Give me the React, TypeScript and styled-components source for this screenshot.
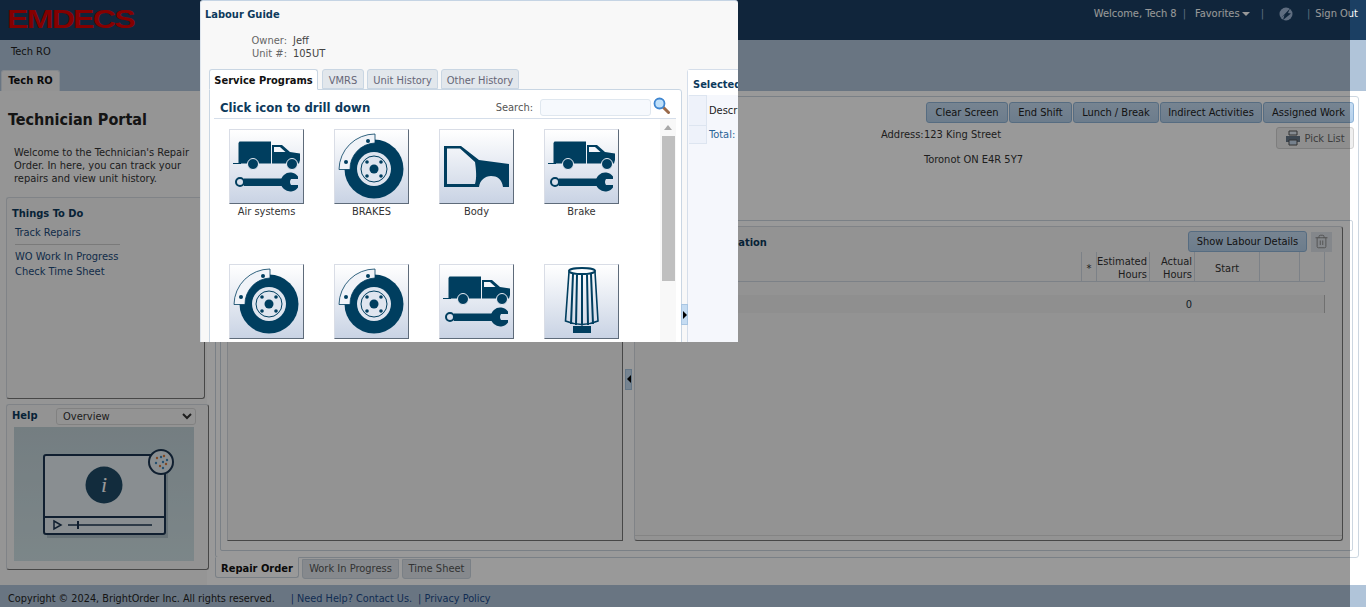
import React from "react";
import styled, { createGlobalStyle } from "styled-components";
import { Trash2 } from "lucide-react";

const GlobalStyle = createGlobalStyle`
  html, body {
    margin: 0;
    padding: 0;
    background: #fff;
  }
  body {
    font-family: "DejaVu Sans Condensed", "DejaVu Sans", sans-serif;
    font-stretch: condensed;
    font-size: 11px;
    color: #333;
  }
  * {
    box-sizing: border-box;
  }
`;

const Page = styled.div`
  position: relative;
  width: 1366px;
  height: 607px;
  overflow: hidden;
  display: flex;
  flex-direction: column;
  background: #fff;
`;

// 상단 헤더
const Header = styled.header`
  height: 40px;
  flex: none;
  background: #1b3f63;
  display: flex;
  align-items: flex-start;
  justify-content: space-between;
  padding: 0 8px;
  color: #fff;
`;

const Logo = styled.div`
  font-family: "Liberation Sans", sans-serif;
  font-size: 26px;
  font-weight: 700;
  line-height: 27px;
  margin: 6px 0 0 -1px;
  color: #de0000;
  letter-spacing: -1.5px;
  transform: scaleX(1.24);
  transform-origin: left center;
`;

const UserMenu = styled.nav`
  display: flex;
  align-items: center;
  height: 28px;
  line-height: 28px;
`;

const MenuSep = styled.span<{ $left: number }>`
  margin-left: ${(p) => p.$left}px;
  color: #9db7d2;
`;

const MenuText = styled.span<{ $left: number }>`
  margin-left: ${(p) => p.$left}px;
`;

const Caret = styled.span`
  width: 0;
  height: 0;
  margin-left: 2px;
  border-left: 4px solid transparent;
  border-right: 4px solid transparent;
  border-top: 4px solid #fff;
`;

const SubNav = styled.div`
  height: 30px;
  flex: none;
  background: #b0c4d9;
  padding: 4px 0 0 11px;
  line-height: 15px;
  color: #222;
`;

const TabStrip = styled.div`
  height: 21px;
  flex: none;
  background: #b0c4d9;
  display: flex;
  padding-left: 1px;
`;

const TopTab = styled.div`
  width: 59px;
  background: #f5f5f5;
  border: 1px solid #dbe3ec;
  border-bottom: none;
  border-radius: 3px 3px 0 0;
  font-weight: 700;
  color: #111;
  text-align: center;
  line-height: 19px;
`;

const Body = styled.main`
  flex: 1;
  min-height: 0;
  display: flex;
  background: #fff;
`;

const Sidebar = styled.aside`
  width: 207px;
  flex: none;
  background: #f8f8f8;
  display: flex;
  flex-direction: column;
  padding-left: 6px;
`;

const PortalTitle = styled.h1`
  margin: 18px 0 0 2px;
  font-size: 16px;
  line-height: 21px;
  font-weight: 700;
  color: #222;
`;

const Intro = styled.p`
  margin: 16px 0 0 8px;
  width: 180px;
  line-height: 13px;
  color: #333;
`;

const SideBox = styled.section`
  background: #f5f5f5;
  border: 1px solid #d5dbe2;
  border-right-color: #777;
  border-bottom-color: #777;
  border-radius: 3px;
`;

const TodoBox = styled(SideBox)`
  width: 199px;
  height: 202px;
  margin-top: 12px;
  padding: 9px 0 0 5px;
`;

const BoxTitle = styled.div`
  font-weight: 700;
  line-height: 14px;
  color: #0d3a5c;
`;

const TodoLink = styled.div`
  margin-left: 3px;
  line-height: 15px;
  color: #1b4a7a;
`;

const TodoRule = styled.div`
  width: 105px;
  height: 1px;
  margin: 4px 0 4px 3px;
  background: #ccc;
`;

const HelpBox = styled(SideBox)`
  width: 203px;
  height: 166px;
  margin-top: 5px;
  padding: 2px 7px 0 5px;
`;

const HelpHead = styled.div`
  display: flex;
  align-items: center;
  justify-content: space-between;
  height: 18px;
  margin-right: 5px;
`;

const HelpSelect = styled.select`
  width: 140px;
  height: 17px;
  padding: 0 2px;
  border: 1px solid #d8d8d8;
  border-radius: 3px;
  background: #f5f5f5;
  font: inherit;
  color: #333;
`;

const HelpPicture = styled.div`
  width: 180px;
  height: 134px;
  margin: 2px 0 0 2px;
  background: linear-gradient(#c2d2d8, #cfe0e4);
`;

const Gutter = styled.div`
  width: 8px;
  flex: none;
  display: flex;
  align-items: center;
  padding-bottom: 66px;
`;

const Handle = styled.div<{ $h?: number }>`
  width: 7px;
  height: ${(p) => p.$h ?? 21}px;
  flex: none;
  background: #c5dcf2;
  border: 1px solid #a9c6e2;
  display: flex;
  align-items: center;
  justify-content: center;
`;

const Arrow = styled.span<{ $left?: boolean }>`
  width: 0;
  height: 0;
  border-top: 4px solid transparent;
  border-bottom: 4px solid transparent;
  ${(p) =>
    p.$left ? "border-right: 4px solid #000;" : "border-left: 4px solid #000;"}
`;

const Workspace = styled.div`
  flex: 1;
  display: flex;
  flex-direction: column;
  padding: 5px 7px 6px 0;
`;

const OuterCard = styled.div`
  height: 462px;
  flex: none;
  border: 1px solid #ccd6e0;
  border-radius: 3px;
  padding: 5px 5px 6px 4px;
  display: flex;
  flex-direction: column;
`;

const TopArea = styled.div`
  height: 118px;
  flex: none;
  position: relative;
  display: flex;
  flex-direction: column;
  align-items: flex-end;
  margin-right: -1px;
`;

const ButtonRow = styled.div`
  display: flex;
  gap: 1px;
`;

const ActionButton = styled.button<{ $w: number }>`
  width: ${(p) => p.$w}px;
  height: 21px;
  padding: 0;
  border: 1px solid #8fb4d8;
  border-radius: 3px;
  background: linear-gradient(#c6dcf2, #b5d0ea);
  color: #222;
  font: inherit;
  white-space: nowrap;
`;

const PickButton = styled.button`
  width: 78px;
  height: 22px;
  margin-top: 4px;
  padding: 0;
  border: 1px solid #d2d2d2;
  border-radius: 3px;
  background: #efefef;
  color: #666;
  font: inherit;
  display: flex;
  align-items: center;
  justify-content: center;
  gap: 3px;
`;

const AddressBlock = styled.div`
  position: absolute;
  left: 661px;
  top: 26px;
  display: grid;
  grid-template-columns: 43px auto;
  row-gap: 12px;
  line-height: 13px;
  color: #333;
`;

const InnerCard = styled.div`
  flex: 1;
  border: 1px solid #ccd6e0;
  border-radius: 2px;
  padding: 5px 9px 9px 6px;
  display: flex;
`;

const PaneLeft = styled.div`
  width: 396px;
  flex: none;
  background: #f5f5f5;
  border: 1px solid #d5dbe2;
  border-right-color: #777;
  border-bottom-color: #777;
`;

const SplitGutter = styled.div`
  width: 11px;
  flex: none;
  display: flex;
  align-items: center;
  justify-content: center;
  padding-bottom: 9px;
`;

const PaneRight = styled.div`
  flex: 1;
  background: #f5f5f5;
  border: 1px solid #d5dbe2;
  border-right-color: #777;
  border-bottom-color: #777;
  border-radius: 3px;
  padding: 4px 0 0 6px;
  display: flex;
  flex-direction: column;
`;

const LabourHead = styled.div`
  height: 21px;
  display: flex;
  align-items: center;
  margin-right: 10px;
`;

const LabourTitle = styled.div`
  flex: 1;
  padding: 2px 0 0 18px;
  font-weight: 700;
  color: #0d3a5c;
`;

const LabourBtn = styled(ActionButton)`
  margin-right: 4px;
`;

const TrashBtn = styled.div`
  width: 21px;
  height: 20px;
  background: #dde2e8;
  display: flex;
  align-items: center;
  justify-content: center;
  color: #888;
`;

const GridRow = styled.div`
  display: grid;
  grid-template-columns: 1fr 15px 53px 45px 65px 40px 25px;
  margin-right: 17px;
`;

const HeadCell = styled.div<{ $right?: boolean }>`
  height: 30px;
  border-right: 1px solid #cfd8e2;
  border-bottom: 1px solid #cfd8e2;
  display: flex;
  align-items: center;
  justify-content: ${(p) => (p.$right ? "flex-end" : "center")};
  text-align: ${(p) => (p.$right ? "right" : "center")};
  line-height: 13px;
  padding: ${(p) => (p.$right ? "2px 2px 0 0" : "3px 0 0")};
  color: #333;
`;

const DataRow = styled(GridRow)`
  height: 18px;
  margin-top: 13px;
  background: #eeeeee;
  border-right: 1px solid #bbb;
  line-height: 20px;
`;

const DataValue = styled.div`
  grid-column: 4;
  text-align: right;
  padding-right: 2px;
  color: #234;
`;

const PaneFoot = styled.div`
  margin: auto 0 4px -6px;
  height: 1px;
  background: #ddd;
`;

const BottomTabs = styled.div`
  display: flex;
  gap: 3px;
  height: 21px;
  flex: none;
`;

const BottomTab = styled.div<{ $active?: boolean; $w: number }>`
  width: ${(p) => p.$w}px;
  height: ${(p) => (p.$active ? 21 : 20)}px;
  margin-top: ${(p) => (p.$active ? -1 : 1)}px;
  background: ${(p) => (p.$active ? "#fff" : "#dfe5ec")};
  border: 1px solid #ccd6e0;
  ${(p) => p.$active && "border-top-color: #fff;"}
  border-radius: 0 0 3px 3px;
  font-weight: ${(p) => (p.$active ? 700 : 400)};
  color: ${(p) => (p.$active ? "#111" : "#555")};
  text-align: center;
  line-height: ${(p) => (p.$active ? 21 : 18)}px;
`;

const Footer = styled.footer`
  height: 22px;
  flex: none;
  background: #b0c4d9;
  display: flex;
  align-items: center;
  padding: 4px 0 0 8px;
  font-size: 10.8px;
  color: #222;
`;

const FootLink = styled.span<{ $left: number }>`
  margin-left: ${(p) => p.$left}px;
  color: #1b4a8a;
`;

// 모달 뒤 어두운 레이어
const Overlay = styled.div`
  position: absolute;
  left: 0;
  top: 0;
  width: 1350px;
  height: 607px;
  background: rgba(0, 0, 0, 0.4);
`;

const Modal = styled.div`
  position: absolute;
  left: 200px;
  top: 0;
  width: 538px;
  height: 342px;
  background: #f8f8f8;
  border-top: 1px solid #c5d4e4;
  border-left: 1px solid #dfe6ee;
  border-radius: 3px 3px 0 0;
  overflow: hidden;
  padding: 7px 0 0 4px;
`;

const ModalTitle = styled.div`
  font-weight: 700;
  line-height: 14px;
  color: #0d3a5c;
`;

const OwnerGrid = styled.div`
  display: grid;
  grid-template-columns: 82px auto;
  column-gap: 6px;
  margin-top: 12px;
  line-height: 13px;
  color: #444;
  justify-content: start;
`;

const OwnerLabel = styled.div`
  text-align: right;
  color: #666;
`;

const ModalColumns = styled.div`
  display: flex;
  margin-top: 9px;
  height: 300px;
`;

const GuideColumn = styled.div`
  width: 473px;
  flex: none;
  margin-left: 4px;
  display: flex;
  flex-direction: column;
`;

const ModalTabs = styled.div`
  display: flex;
  height: 21px;
  flex: none;
  margin-bottom: -1px;
  position: relative;
`;

const ModalTab = styled.div<{ $active?: boolean; $w: number; $gap: number }>`
  width: ${(p) => p.$w}px;
  margin-right: ${(p) => p.$gap}px;
  height: ${(p) => (p.$active ? 21 : 20)}px;
  background: ${(p) => (p.$active ? "#fff" : "#e2e7ec")};
  border: 1px solid #c9d6e3;
  ${(p) => p.$active && "border-bottom-color: #fff;"}
  border-radius: 3px 3px 0 0;
  font-weight: ${(p) => (p.$active ? 700 : 400)};
  color: ${(p) => (p.$active ? "#111" : "#667")};
  text-align: center;
  line-height: 21px;
`;

const GuidePanel = styled.div`
  flex: 1;
  background: #fff;
  border: 1px solid #c9d6e3;
  border-radius: 0 3px 0 0;
  padding: 0 5px 0 4px;
  display: flex;
  flex-direction: column;
  overflow: hidden;
`;

const GuideHead = styled.div`
  height: 29px;
  flex: none;
  display: flex;
  align-items: center;
  padding: 6px 0 0 6px;
  border-bottom: 1px solid #d5deea;
`;

const DrillTitle = styled.div`
  font-size: 13px;
  font-weight: 700;
  color: #0d3a5c;
  flex: 1;
`;

const SearchLabel = styled.label`
  color: #555;
  margin-right: 7px;
`;

const SearchInput = styled.input`
  width: 111px;
  height: 17px;
  border: 1px solid #dfe7ef;
  border-radius: 3px;
  background: #f6f9fd;
  margin-right: 2px;
`;

const SearchIcon = styled.svg`
  width: 17px;
  height: 17px;
  margin-top: -4px;
  margin-right: 6px;
`;

const GuideBody = styled.div`
  flex: 1;
  display: flex;
  min-height: 0;
`;

const TileGrid = styled.div`
  flex: 1;
  display: grid;
  grid-template-columns: repeat(4, 105px);
  grid-auto-rows: 135px;
  padding: 10px 0 0 15px;
`;

const Tile = styled.div`
  width: 75px;
  text-align: center;
`;

const TileIcon = styled.svg`
  display: block;
  width: 75px;
  height: 75px;
  background: linear-gradient(#fff, #c9d3e4);
  border: 1px solid #d9dde6;
  border-right-color: #5e6b7a;
  border-bottom-color: #5e6b7a;
`;

const TileLabel = styled.div`
  margin-top: 1px;
  line-height: 14px;
  white-space: nowrap;
  color: #333;
`;

const Scrollbar = styled.div`
  width: 16px;
  flex: none;
  background: #f8f8f8;
  display: flex;
  flex-direction: column;
  align-items: center;
  padding-top: 6px;
`;

const ScrollArrow = styled.span`
  width: 0;
  height: 0;
  margin-bottom: 6px;
  border-left: 4px solid transparent;
  border-right: 4px solid transparent;
  border-bottom: 5px solid #a8a8a8;
`;

const ScrollThumb = styled.div`
  width: 13px;
  height: 145px;
  background: #bfbfbf;
`;

const ModalGutter = styled.div`
  width: 5px;
  flex: none;
  position: relative;
`;

const ModalHandle = styled(Handle)`
  position: absolute;
  left: -1px;
  top: 235px;
`;

const SelectedPane = styled.div`
  width: 200px;
  flex: none;
  margin-top: 0;
  background: #f5f7fc;
  border: 1px solid #d5deea;
  border-radius: 3px 0 0 0;
`;

const SelectedTitle = styled.div`
  height: 25px;
  background: #fff;
  padding: 2px 0 0 5px;
  font-weight: 700;
  line-height: 26px;
  color: #0d3a5c;
`;

const SelectedRow = styled.div<{ $h: number }>`
  display: grid;
  grid-template-columns: 18px 1fr;
  height: ${(p) => p.$h}px;
  margin-left: 1px;
  line-height: ${(p) => p.$h + 2}px;
`;

const SelectedBlank = styled.div`
  background: #eef2fa;
  border: 1px solid #dde5f0;
  border-left: none;
`;

const SelectedCell = styled.div<{ $link?: boolean }>`
  padding-left: 2px;
  color: ${(p) => (p.$link ? "#2a6496" : "#222")};
`;

const NAVY = "#003e5f";

const TruckWrench = () => (
  <TileIcon viewBox="0 0 73 73">
    <g transform="translate(-1 -1)">
      <path fill={NAVY} d="M9.500 14l1-1.500H42V34.500H9.500z" />
      <path fill={NAVY} d="M4 34h8v1H4z" />
      <path fill={NAVY} d="M43 16h10l8 7 10 1.500V31l-1 3.500H43z" />
      <path fill="#f3f5fa" d="M45 18h6l5.500 5H45z" />
      <circle cx="24" cy="35" r="5.500" fill={NAVY} stroke="#e8ecf4" strokeWidth="1" />
      <circle cx="63" cy="35" r="5.500" fill={NAVY} stroke="#e8ecf4" strokeWidth="1" />
      <circle cx="11" cy="53" r="4" fill="none" stroke={NAVY} strokeWidth="2" />
      <path fill={NAVY} d="M15 49.500h38v7.500H15z" />
      <path fill={NAVY} d="M69 47.500A9.500 9.500 0 1 0 69 58.500L69 56H62Q60 53 62 50H69Z" />
    </g>
  </TileIcon>
);

const BrakeDisc = () => (
  <TileIcon viewBox="0 0 73 73">
    <g transform="translate(-1 -1)">
      <circle cx="40" cy="40" r="29.500" fill={NAVY} />
      <circle cx="40" cy="40" r="17" fill="#dfe5ef" />
      <circle cx="40" cy="40" r="13" fill="none" stroke={NAVY} strokeWidth="1" />
      <circle cx="40" cy="40" r="4.500" fill={NAVY} />
      <circle cx="33" cy="33" r="1.800" fill={NAVY} />
      <circle cx="47" cy="33" r="1.800" fill={NAVY} />
      <circle cx="33" cy="47" r="1.800" fill={NAVY} />
      <circle cx="47" cy="47" r="1.800" fill={NAVY} />
      <path
        fill="#f0f3f8"
        stroke={NAVY}
        strokeWidth="0.800"
        d="M5 40.500A36 36 0 0 1 41 5V14A26 26 0 0 0 16 40.500z"
      />
      <circle cx="34" cy="12" r="2" fill={NAVY} />
      <circle cx="12" cy="33" r="2" fill={NAVY} />
    </g>
  </TileIcon>
);

const BodyPanel = () => (
  <TileIcon viewBox="0 0 73 73">
    <path
      transform="translate(-1 -1)"
      fill={NAVY}
      fillRule="evenodd"
      d="M5 17H22L40 31 70 35V58H64C63 50 58 47 52 47 46 47 41 51 40 58H5zM8 19.500V55H36C38 49 37 40 36 33L21 19.500z"
    />
  </TileIcon>
);

const AirFilter = () => (
  <TileIcon viewBox="0 0 73 73">
    <g transform="translate(-1 -1)" fill="none" stroke={NAVY}>
      <ellipse cx="38" cy="7" rx="13" ry="3" strokeWidth="2" />
      <path strokeWidth="1.600" d="M25 8L21.500 57Q38 64 54 57L51 8" />
      <path strokeWidth="2" d="M29 10L27 60M33 10.500L32 61M38 11V61.500M43 10.500L44 61M47 10L49 60" />
      <path fill={NAVY} strokeWidth="0" d="M29 62h18v7H29z" />
    </g>
  </TileIcon>
);

const tiles = [
  { label: "Air systems", Icon: TruckWrench },
  { label: "BRAKES", Icon: BrakeDisc },
  { label: "Body", Icon: BodyPanel },
  { label: "Brake", Icon: TruckWrench },
  { label: "Brakes", Icon: BrakeDisc },
  { label: "Brakes", Icon: BrakeDisc },
  { label: "Cab", Icon: TruckWrench },
  { label: "Filters", Icon: AirFilter },
];

const topButtons: [string, number][] = [
  ["Clear Screen", 82],
  ["End Shift", 63],
  ["Lunch / Break", 86],
  ["Indirect Activities", 102],
  ["Assigned Work", 91],
];

export default function App() {
  return (
    <Page>
      <GlobalStyle />
      <Header>
        <Logo>EMDECS</Logo>
        <UserMenu>
          <span>Welcome, Tech 8</span>
          <MenuSep $left={6}>|</MenuSep>
          <MenuText $left={9}>Favorites</MenuText>
          <Caret />
          <MenuSep $left={11}>|</MenuSep>
          <svg width="14" height="14" viewBox="0 0 14 14" style={{ marginLeft: 15 }}>
            <circle cx="7" cy="7" r="6.500" fill="#9fb6d6" />
            <path d="M2 11L11 1.500 9 6 12 6.500 4 13 5.500 8z" fill="#1b3f63" />
          </svg>
          <MenuSep $left={14}>|</MenuSep>
          <MenuText $left={5}>Sign Out</MenuText>
        </UserMenu>
      </Header>
      <SubNav>Tech RO</SubNav>
      <TabStrip>
        <TopTab>Tech RO</TopTab>
      </TabStrip>
      <Body>
        <Sidebar>
          <PortalTitle>Technician Portal</PortalTitle>
          <Intro>
            Welcome to the Technician's Repair Order. In here, you can track your
            repairs and view unit history.
          </Intro>
          <TodoBox>
            <BoxTitle>Things To Do</BoxTitle>
            <TodoLink style={{ marginTop: 4 }}>Track Repairs</TodoLink>
            <TodoRule />
            <TodoLink>WO Work In Progress</TodoLink>
            <TodoLink>Check Time Sheet</TodoLink>
          </TodoBox>
          <HelpBox>
            <HelpHead>
              <BoxTitle>Help</BoxTitle>
              <HelpSelect defaultValue="Overview">
                <option>Overview</option>
              </HelpSelect>
            </HelpHead>
            <HelpPicture>
              <svg width="180" height="134" viewBox="0 0 180 134">
                <rect x="33" y="32" width="121" height="79" fill="#1b3550" opacity="0.18" />
                <rect x="30" y="28" width="121" height="79" rx="2" fill="#e4edf2" stroke="#1b3550" strokeWidth="2" />
                <path d="M30 90H151" stroke="#1b3550" strokeWidth="2" />
                <circle cx="90" cy="58" r="18.500" fill="#1f4a66" />
                <text x="90" y="65" textAnchor="middle" fill="#fff" fontSize="22" fontStyle="italic" fontFamily="Liberation Serif, serif">i</text>
                <path d="M40 94L47 98 40 102z" fill="none" stroke="#1b3550" strokeWidth="1.500" />
                <path d="M54 98H138" stroke="#1b3550" strokeWidth="1.500" />
                <path d="M64 94V102" stroke="#1b3550" strokeWidth="2" />
                <circle cx="147" cy="35" r="12" fill="#e4edf2" stroke="#1b3550" strokeWidth="2" />
                <g fill="#d9793a">
                  <circle cx="143" cy="31" r="1.200" />
                  <circle cx="150" cy="29" r="1.200" />
                  <circle cx="146" cy="39" r="1.200" />
                  <circle cx="152" cy="37" r="1.200" />
                </g>
                <g fill="#3f86b8">
                  <circle cx="147" cy="30" r="1.200" />
                  <circle cx="153" cy="33" r="1.200" />
                  <circle cx="142" cy="36" r="1.200" />
                  <circle cx="149" cy="35" r="1.200" />
                  <circle cx="149" cy="41" r="1.200" />
                </g>
              </svg>
            </HelpPicture>
          </HelpBox>
        </Sidebar>
        <Gutter>
          <Handle>
            <Arrow $left />
          </Handle>
        </Gutter>
        <Workspace>
          <OuterCard>
            <TopArea>
              <ButtonRow>
                {topButtons.map(([label, w]) => (
                  <ActionButton key={label} $w={w}>
                    {label}
                  </ActionButton>
                ))}
              </ButtonRow>
              <PickButton>
                <svg width="16" height="16" viewBox="0 0 16 16">
                  <path d="M4 1h8v4H4z" fill="#dfe8f2" stroke="#555" />
                  <path d="M1 6h14v6H1z" fill="#667788" />
                  <path d="M4 10h8v5H4z" fill="#c5d8ec" stroke="#555" />
                </svg>
                Pick List
              </PickButton>
              <AddressBlock>
                <span>Address:</span>
                <span>123 King Street</span>
                <span />
                <span>Toronot ON E4R 5Y7</span>
              </AddressBlock>
            </TopArea>
            <InnerCard>
              <PaneLeft />
              <SplitGutter>
                <Handle>
                  <Arrow $left />
                </Handle>
              </SplitGutter>
              <PaneRight>
                <LabourHead>
                  <LabourTitle>Labour Information</LabourTitle>
                  <LabourBtn $w={119}>Show Labour Details</LabourBtn>
                  <TrashBtn>
                    <Trash2 size={15} strokeWidth={1.500} />
                  </TrashBtn>
                </LabourHead>
                <GridRow>
                  <HeadCell />
                  <HeadCell>*</HeadCell>
                  <HeadCell $right>
                    Estimated
                    <br />
                    Hours
                  </HeadCell>
                  <HeadCell $right>
                    Actual
                    <br />
                    Hours
                  </HeadCell>
                  <HeadCell>Start</HeadCell>
                  <HeadCell />
                  <HeadCell />
                </GridRow>
                <DataRow>
                  <DataValue>0</DataValue>
                </DataRow>
                <PaneFoot />
              </PaneRight>
            </InnerCard>
          </OuterCard>
          <BottomTabs>
            <BottomTab $active $w={84}>
              Repair Order
            </BottomTab>
            <BottomTab $w={97}>Work In Progress</BottomTab>
            <BottomTab $w={69}>Time Sheet</BottomTab>
          </BottomTabs>
        </Workspace>
      </Body>
      <Footer>
        <span>Copyright © 2024, BrightOrder Inc. All rights reserved.</span>
        <FootLink $left={16}>| Need Help? Contact Us.</FootLink>
        <FootLink $left={6}>| Privacy Policy</FootLink>
      </Footer>
      <Overlay />
      <Modal>
        <ModalTitle>Labour Guide</ModalTitle>
        <OwnerGrid>
          <OwnerLabel>Owner:</OwnerLabel>
          <span>Jeff</span>
          <OwnerLabel>Unit #:</OwnerLabel>
          <span>105UT</span>
        </OwnerGrid>
        <ModalColumns>
          <GuideColumn>
            <ModalTabs>
              <ModalTab $active $w={109} $gap={4}>
                Service Programs
              </ModalTab>
              <ModalTab $w={42} $gap={3}>
                VMRS
              </ModalTab>
              <ModalTab $w={71} $gap={3}>
                Unit History
              </ModalTab>
              <ModalTab $w={78} $gap={0}>
                Other History
              </ModalTab>
            </ModalTabs>
            <GuidePanel>
              <GuideHead>
                <DrillTitle>Click icon to drill down</DrillTitle>
                <SearchLabel>Search:</SearchLabel>
                <SearchInput />
                <SearchIcon viewBox="0 0 17 17">
                  <path d="M10 10l5.500 5.500" stroke="#9a6a4a" strokeWidth="3" strokeLinecap="round" />
                  <circle cx="6.500" cy="6.500" r="5" fill="#bfe0fa" stroke="#3f86d0" strokeWidth="1.800" />
                </SearchIcon>
              </GuideHead>
              <GuideBody>
                <TileGrid>
                  {tiles.map(({ label, Icon }, i) => (
                    <Tile key={i}>
                      <Icon />
                      <TileLabel>{label}</TileLabel>
                    </Tile>
                  ))}
                </TileGrid>
                <Scrollbar>
                  <ScrollArrow />
                  <ScrollThumb />
                </Scrollbar>
              </GuideBody>
            </GuidePanel>
          </GuideColumn>
          <ModalGutter>
            <ModalHandle>
              <Arrow />
            </ModalHandle>
          </ModalGutter>
          <SelectedPane>
            <SelectedTitle>Selected Items</SelectedTitle>
            <SelectedRow $h={30}>
              <SelectedBlank />
              <SelectedCell>Description</SelectedCell>
            </SelectedRow>
            <SelectedRow $h={17}>
              <SelectedBlank />
              <SelectedCell $link>Total:</SelectedCell>
            </SelectedRow>
          </SelectedPane>
        </ModalColumns>
      </Modal>
    </Page>
  );
}
